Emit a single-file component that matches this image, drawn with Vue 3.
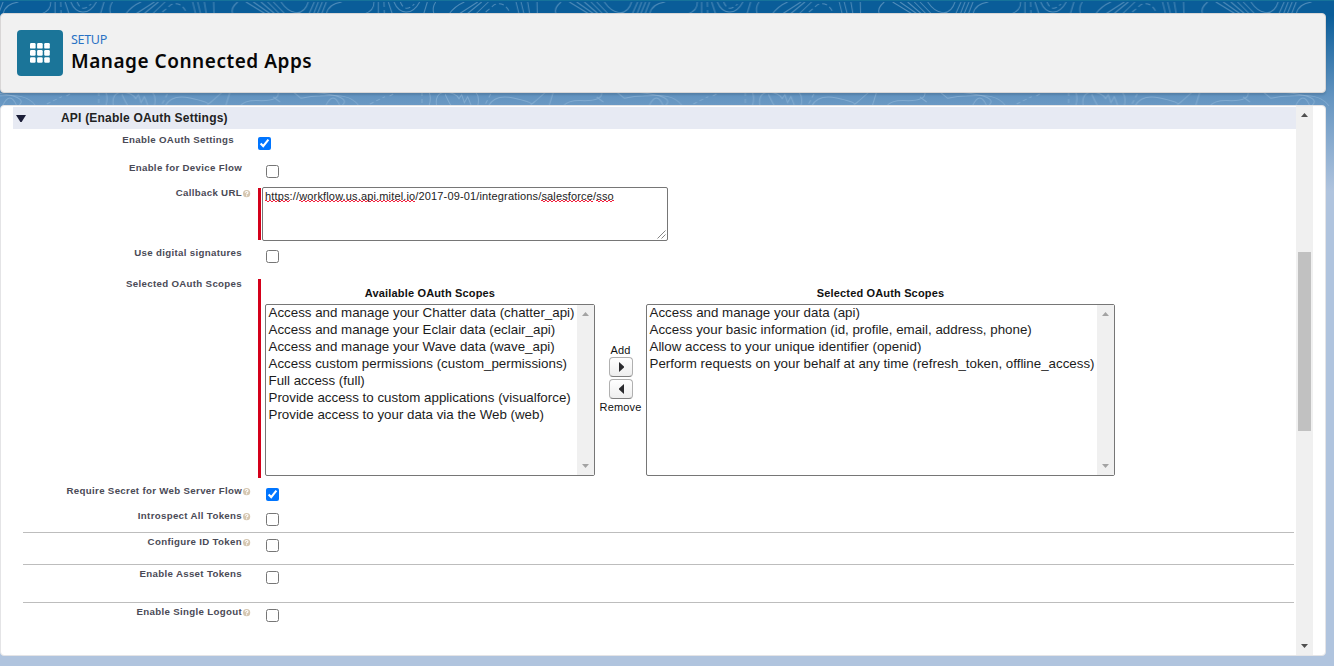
<script setup>
const available = [
  'Access and manage your Chatter data (chatter_api)',
  'Access and manage your Eclair data (eclair_api)',
  'Access and manage your Wave data (wave_api)',
  'Access custom permissions (custom_permissions)',
  'Full access (full)',
  'Provide access to custom applications (visualforce)',
  'Provide access to your data via the Web (web)',
]
const selected = [
  'Access and manage your data (api)',
  'Access your basic information (id, profile, email, address, phone)',
  'Allow access to your unique identifier (openid)',
  'Perform requests on your behalf at any time (refresh_token, offline_access)',
]
const url = [
  { t: 'https', bad: true },
  { t: '://' },
  { t: 'workflow.us.api.mitel.io', bad: true },
  { t: '/2017-09-01/integrations/' },
  { t: 'salesforce', bad: true },
  { t: '/' },
  { t: 'sso', bad: true },
]
const rows = [
  { id: 'oauth', label: 'Enable OAuth Settings', checked: true },
  { id: 'device', label: 'Enable for Device Flow' },
  { id: 'callback', label: 'Callback URL', help: true, kind: 'url' },
  { id: 'digital', label: 'Use digital signatures' },
  { id: 'scopes', label: 'Selected OAuth Scopes', kind: 'scopes' },
  { id: 'secret', label: 'Require Secret for Web Server Flow', help: true, checked: true },
  { id: 'introspect', label: 'Introspect All Tokens', help: true },
  { id: 'idtoken', label: 'Configure ID Token', help: true, line: true },
  { id: 'asset', label: 'Enable Asset Tokens', line: true },
  { id: 'logout', label: 'Enable Single Logout', help: true, line: true },
]
</script>

<template>
  <div class="page">
    <svg class="topo" width="1334" height="200" aria-hidden="true">
      <defs>
        <pattern id="contours" x="445" y="0" width="323.3" height="200" patternUnits="userSpaceOnUse">
          <g transform="scale(.33333)" fill="none" stroke="#a5c6e3" stroke-opacity=".45" stroke-width="3">
            <path d="M12 42Q30 18 58 6M42 42L98 6M66 42L110 6M92 42L130 6M213 6L222 42M228 6L237 42M248 6L254 42M276 6L277 42M348 6Q325 25 333 42M373 6L432 42M395 6L447 42M418 6L460 42M438 6L474 42M455 6L490 42M478 6C505 45 545 52 560 6M578 6L562 42M590 6L576 42M602 6L587 42M614 6L600 42M614 42Q620 12 660 6M728 42Q758 32 757 6M770 6L770 42M800 6L812 42M817 6C832 42 870 50 894 6M917 6L906 42M942 6Q930 24 937 42" />
            <path stroke-dasharray="15 9" d="M122 36L148 14Q180 2 196 42M787 6L788 42M836 6Q850 40 878 12" />
            <path d="M0 282Q20 325 20 315M0 276Q32 278 42 296L50 284L58 308L68 290L78 315M92 276Q105 292 98 318M130 318Q150 282 205 294T258 312T302 276M325 276L312 318M355 318Q370 298 420 302Q472 302 470 278M455 291L475 306M515 276L538 295Q570 288 595 288C650 284 690 285 712 318M612 318Q635 270 655 318M922 276Q930 294 922 318M945 318Q938 280 970 276" />
            <path stroke-dasharray="12 9" d="M137 282L118 318M745 312L790 290M804 288L822 278M901 276V318" />
            <path d="M550 60Q600 80 575 130T600 180T550 220T602 280T558 360M520 320Q600 370 620 450" />
          </g>
        </pattern>
        <linearGradient id="fadeGradient" x2="0" y2="1">
          <stop offset=".5" stop-color="#fff" /><stop offset=".92" stop-color="#000" />
        </linearGradient>
        <mask id="fade"><rect width="1334" height="200" fill="url(#fadeGradient)" /></mask>
      </defs>
      <rect y="2" width="1334" height="198" fill="url(#contours)" mask="url(#fade)" />
    </svg>

    <header class="head">
      <div class="tile">
        <svg width="20" height="20" viewBox="0 0 20 20" fill="#fff">
          <template v-for="r in 3" :key="r">
            <rect v-for="c in 3" :key="c" :x="(c - 1) * 7.1" :y="(r - 1) * 7.1" width="5.6" height="5.6" rx="1.2" />
          </template>
        </svg>
      </div>
      <div class="titles">
        <div class="eyebrow">SETUP</div>
        <h1>Manage Connected Apps</h1>
      </div>
    </header>

    <main class="panel">
      <div class="content">
        <div class="section">
          <svg width="10" height="7" viewBox="0 0 10 7"><path d="M0 0H10L5.6 7H4.4Z" fill="#1b1e38" /></svg>
          <span>API (Enable OAuth Settings)</span>
        </div>
        <div v-for="row in rows" :key="row.id" class="row" :class="[row.id, { line: row.line }]">
          <label class="label" :for="row.id"><span>{{ row.label }}</span></label>
          <div class="help">
            <svg v-if="row.help" width="8" height="8" viewBox="0 0 8 8">
              <circle cx="3.6" cy="3.7" r="3.6" fill="#d5c6b0" />
              <path d="M2.2 2.7Q2.3 1.5 3.6 1.5T5 2.7Q4.9 3.4 3.6 3.9V4.6M3.6 5.2V6.3" fill="none" stroke="#fff" stroke-width="1.1" />
            </svg>
          </div>

          <div v-if="row.kind === 'url'" class="required urlfield">
            <div class="textarea">
              <span class="url"><span v-for="(p, i) in url" :key="i" :class="{ bad: p.bad }">{{ p.t }}</span></span>
              <svg class="grip" width="9" height="9" viewBox="0 0 9 9"><path d="M.5 8.5L8.5 .5M4.5 8.5L8.5 4.5" stroke="#666" stroke-width=".8" /></svg>
            </div>
          </div>

          <div v-else-if="row.kind === 'scopes'" class="required scopes">
            <div class="pick first">
              <div class="picktitle">Available OAuth Scopes</div>
              <div class="list">
                <ul><li v-for="o in available" :key="o">{{ o }}</li></ul>
                <div class="bar">
                  <svg width="7" height="4"><path d="M0 4L3.5 0L7 4Z" fill="#a3a3a3" /></svg>
                  <svg width="7" height="4"><path d="M0 0L3.5 4L7 0Z" fill="#a3a3a3" /></svg>
                </div>
              </div>
            </div>
            <div class="move">
              <span>Add</span>
              <button><svg width="5" height="10"><path d="M0 0L5 4.5V5.5L0 10Z" fill="#2b2b2e" /></svg></button>
              <button><svg width="5" height="10"><path d="M5 0L0 4.5V5.5L5 10Z" fill="#2b2b2e" /></svg></button>
              <span class="rem">Remove</span>
            </div>
            <div class="pick second">
              <div class="picktitle">Selected OAuth Scopes</div>
              <div class="list">
                <ul><li v-for="o in selected" :key="o">{{ o }}</li></ul>
                <div class="bar">
                  <svg width="7" height="4"><path d="M0 4L3.5 0L7 4Z" fill="#a3a3a3" /></svg>
                  <svg width="7" height="4"><path d="M0 0L3.5 4L7 0Z" fill="#a3a3a3" /></svg>
                </div>
              </div>
            </div>
          </div>

          <input v-else :id="row.id" type="checkbox" :checked="row.checked" />
        </div>
      </div>
      <div class="scroll">
        <svg width="7" height="4"><path d="M0 4L3.5 0L7 4Z" fill="#4f4f4f" /></svg>
        <div class="thumb"></div>
        <svg width="7" height="4"><path d="M0 0L3.5 4L7 0Z" fill="#4f4f4f" /></svg>
      </div>
    </main>
  </div>
</template>

<style>
body { overflow: hidden; }
</style>

<style scoped>
* { box-sizing: border-box; }
.page {
  position: relative;
  width: 1334px;
  height: 666px;
  overflow: hidden;
  padding-top: 12px;
  border-top: 1px solid #16739a;
  background: linear-gradient(#0a5d99 0, #0a5d99 14px, #6595c1 97px, #b0c4de 190px);
  font-family: "Liberation Sans", Arial, sans-serif;
  color: #111;
}
.topo { position: absolute; left: 0; top: -1px; }
.head {
  position: relative;
  width: 1326px;
  height: 80px;
  display: flex;
  align-items: flex-start;
  gap: 8px;
  padding: 16px 0 0 16px;
  background: #f1f1f1;
  border: 1px solid #d8d6d6;
  border-radius: 4px;
  box-shadow: 0 2px 2px rgba(0, 0, 0, .12);
}
.tile {
  width: 46px;
  height: 46px;
  border-radius: 4px;
  background: #1b7599;
  display: grid;
  place-items: center;
}
.titles { font-family: "Noto Sans", sans-serif; padding-top: 1px; }
.eyebrow { font-size: 12.5px; line-height: 18px; color: #2a72c4; letter-spacing: -.3px; }
h1 { margin: 0; font-size: 19px; line-height: 24px; font-weight: 600; letter-spacing: .52px; color: #080707; white-space: nowrap; }
.panel {
  position: relative;
  margin-top: 12px;
  width: 1326px;
  height: 551px;
  display: flex;
  background: #fff;
  border: 1px solid #e4e4e6;
  border-radius: 4px;
}
.content { width: 1295px; padding: 1px 0 0 12px; }
.section {
  height: 22px;
  margin-bottom: 5px;
  display: flex;
  align-items: center;
  gap: 35px;
  padding-left: 3px;
  background: #e7eaf3;
  font-size: 12px;
  font-weight: 700;
  letter-spacing: .2px;
  color: #222;
}
.row { display: flex; align-items: flex-start; height: 25px; margin: 0 2px 0 10px; }
.row.oauth { height: 28px; }
.row.callback { height: 60px; }
.row.digital { height: 31px; }
.row.scopes:not(.required) { height: 207px; }
.row.introspect { height: 22px; }
.row.line { border-top: 1px solid #bdbdbd; padding-top: 3px; height: 32px; }
.row.asset { height: 38px; }
.row.logout { height: 40px; }
.label {
  width: 219px;
  text-align: right;
  font-size: 9.7px;
  line-height: 12px;
  font-weight: 700;
  letter-spacing: .32px;
  color: #4a4a56;
  white-space: nowrap;
}
.oauth .label { width: 211px; }
.help { width: 16px; height: 12px; padding: 3px 0 0 1px; }
.help svg { display: block; }
input { margin: 3px 0 0 8px; width: 13px; height: 13px; }
.required { position: relative; }
.required::before { content: ""; width: 3px; background: #d4001a; flex: none; }
.urlfield { display: flex; }
.urlfield::before { margin: 1px 1px 1px 0; }
.textarea {
  position: relative;
  width: 406px;
  height: 54px;
  padding: 2px;
  border: 1px solid #767676;
  border-radius: 2px;
  background: #fff;
  font-size: 11px;
  line-height: 13px;
  letter-spacing: .15px;
  color: #222;
}
.url { white-space: nowrap; }
.bad {
  background-image:
    repeating-linear-gradient(90deg, #f0223f 0 2px, transparent 2px 4px),
    repeating-linear-gradient(90deg, transparent 0 2px, #f0223f 2px 4px);
  background-size: 100% 1px;
  background-repeat: no-repeat;
  background-position: 0 calc(100% - 1px), 0 100%;
}
.grip { position: absolute; right: 1px; bottom: 1px; }
.scopes.required { display: flex; height: 199px; margin-top: 1px; }
.pick { padding-top: 7px; }
.first { margin-left: 4px; width: 330px; }
.second { width: 469px; }
.picktitle { text-align: center; font-size: 11px; font-weight: 700; line-height: 14px; height: 18px; letter-spacing: .16px; }
.list { height: 172px; display: flex; justify-content: space-between; border: 1px solid #767676; border-radius: 2px; background: #fff; }
ul { list-style: none; margin: -1px 0 0; padding: 0 0 0 2.5px; font-size: 13.333px; line-height: 17px; white-space: nowrap; color: #1c1c1c; }
.bar, .scroll { width: 17px; background: #f0f0f0; display: flex; flex-direction: column; align-items: center; justify-content: space-between; flex: none; }
.bar { padding: 7px 0; }
.move { width: 51px; padding-top: 64px; display: flex; flex-direction: column; align-items: center; font-size: 11px; line-height: 14px; letter-spacing: .15px; }
.move button {
  width: 24px;
  height: 20px;
  margin: 0 0 2px 1px;
  padding: 0 0 0 1px;
  display: grid;
  place-items: center;
  border: 1px solid #b0b0b0;
  border-bottom-color: #7f7f7f;
  border-radius: 4px;
  background: linear-gradient(#fff, #eee);
}
.rem { margin-top: -1px; }
.scroll { padding: 7px 0; justify-content: flex-start; }
.thumb { width: 13px; height: 179px; background: #c1c1c1; margin-top: 135px; margin-bottom: auto; }
</style>
